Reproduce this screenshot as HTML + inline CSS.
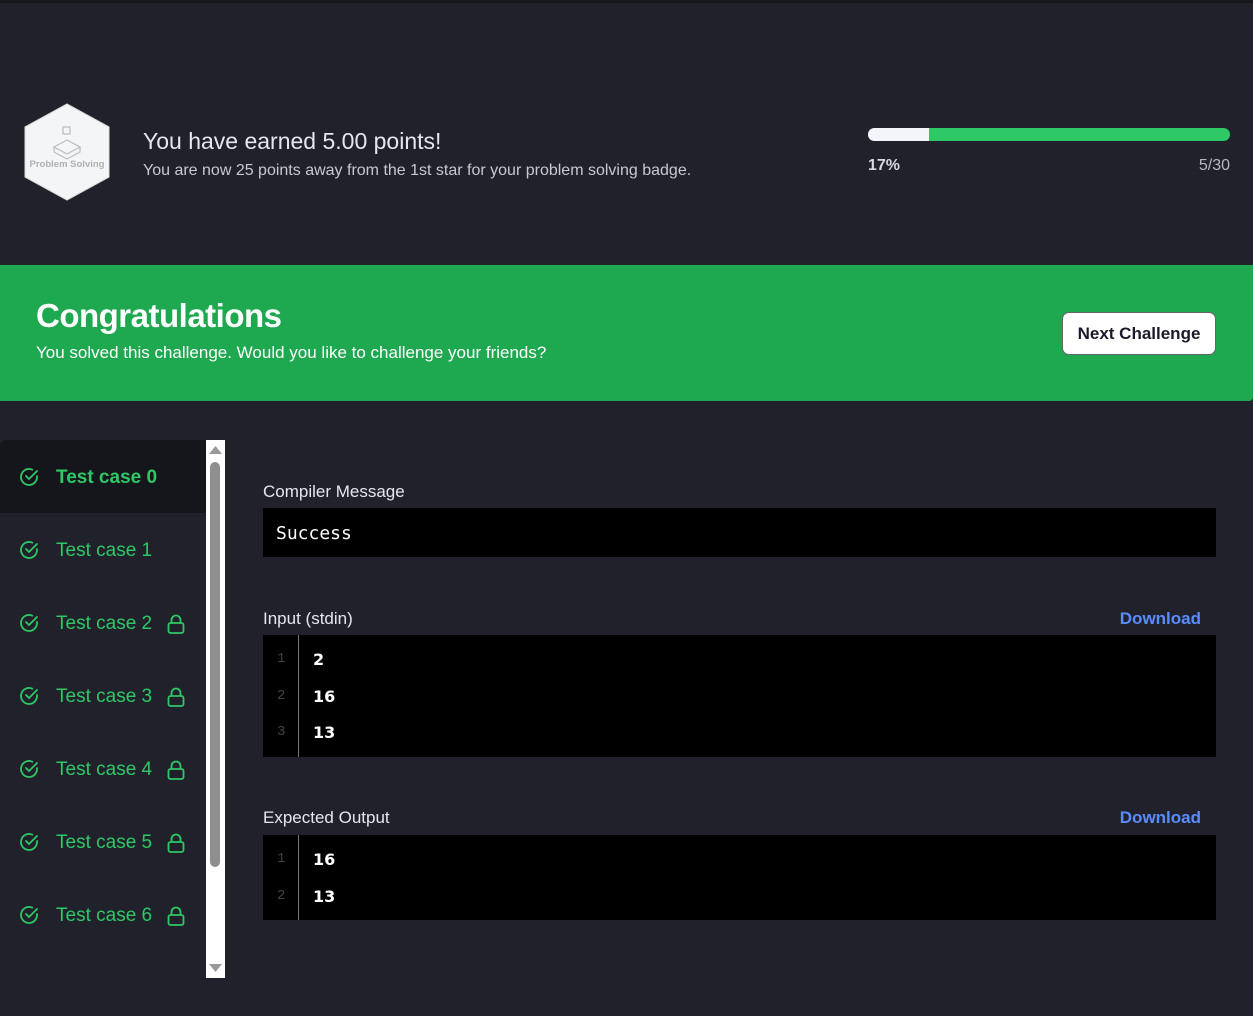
<!DOCTYPE html>
<html><head><meta charset="utf-8"><style>
*{margin:0;padding:0;box-sizing:border-box}
body{width:1253px;height:1016px;background:#20212b;font-family:"Liberation Sans",sans-serif;position:relative;overflow:hidden;color:#e6e6ee}
.topline{position:absolute;left:0;top:0;width:1253px;height:3px;background:#16171d}
.abs{position:absolute}
.tc{position:absolute;left:0;width:206px;height:73px;display:flex;align-items:center;font-size:19px;color:#2ec866;padding-top:3px}
.tc svg.c{margin-left:19px;margin-right:17px;margin-top:-3px}
.lock{margin-left:15px}
.box{position:absolute;left:263px;width:953px;background:#000}
.ln{position:absolute;left:0;width:36px;border-right:1px solid #777;height:100%;top:0}
.num{position:absolute;color:#444;font-size:14px;font-family:"Liberation Mono",monospace;left:14px}
.val{position:absolute;left:50px;color:#fff;font-weight:bold;font-size:16px;font-family:"DejaVu Sans",sans-serif}
.lbl{position:absolute;left:263px;font-size:17px;color:#e6e6ee}
.dl{position:absolute;right:52px;font-size:17px;font-weight:bold;color:#5b8cff}
</style></head><body>
<div class="topline"></div>
<svg class="abs" style="left:20px;top:102px" width="94" height="100" viewBox="0 0 94 100"><polygon points="47,2 89,25 89,75 47,98 5,75 5,25" fill="#f4f5f7" stroke="#ddd" stroke-width="1" stroke-linejoin="round"/>
<g fill="none" stroke="#bbb" stroke-width="1.2"><polygon points="47,38 60,45 47,52 34,45"/><path d="M34,45v5l13,7 13-7v-5"/><rect x="43" y="25" width="7" height="7"/></g>
<text x="47" y="65" font-size="9.5" font-weight="bold" fill="#b0b0b0" text-anchor="middle" font-family="Liberation Sans">Problem Solving</text></svg>
<div class="abs" style="left:143px;top:128px;font-size:23px;color:#e6e6ee">You have earned 5.00 points!</div>
<div class="abs" style="left:143px;top:162px;font-size:16px;color:#c8c8d2">You are now 25 points away from the 1st star for your problem solving badge.</div>
<div class="abs" style="left:868px;top:128px;width:362px;height:13px;border-radius:7px;background:#2ec866;overflow:hidden"><div style="width:61px;height:13px;background:#f4f5fb"></div></div>
<div class="abs" style="left:868px;top:157px;font-size:16px;font-weight:bold;color:#d8d8e0">17%</div>
<div class="abs" style="left:1194px;top:157px;font-size:16px;color:#b8b8c2;width:36px;text-align:right">5/30</div>
<div class="abs" style="left:0;top:265px;width:1253px;height:136px;background:#1ea84f;border-radius:0 0 4px 0"></div>
<div class="abs" style="left:36px;top:297px;font-size:33px;font-weight:bold;color:#fff;letter-spacing:-0.5px">Congratulations</div>
<div class="abs" style="left:36px;top:343px;font-size:17px;color:#fff">You solved this challenge. Would you like to challenge your friends?</div>
<div class="abs" style="left:1062px;top:312px;width:154px;height:43px;background:#fff;border:1px solid #666;border-radius:7px;color:#1a1a2a;font-size:17px;display:flex;align-items:center;justify-content:center;font-weight:bold">Next Challenge</div>
<div class="abs" style="left:0;top:440px;width:206px;height:73px;background:#15161b;border-radius:6px 0 0 0"></div>
<div class="abs" style="left:206px;top:440px;width:19px;height:538px;background:#fff"></div>
<div class="abs" style="left:210px;top:462px;width:10px;height:405px;background:#8f8f8f;border-radius:5px"></div>
<svg class="abs" style="left:209px;top:446px" width="13" height="9"><polygon points="6.5,0 13,8 0,8" fill="#999"/></svg>
<svg class="abs" style="left:209px;top:964px" width="13" height="9"><polygon points="0,0 13,0 6.5,8" fill="#999"/></svg>
<div class="tc" style="top:440px;font-weight:bold"><svg class="c" width="20" height="20" viewBox="0 0 20 20" fill="none" stroke="#2ec866" stroke-width="1.8" stroke-linecap="round"><path d="M18,9v1a8,8 0 1 1-4.7-7.3"/><path d="M7,9l3,3 8-8"/></svg>Test case 0</div>
<div class="tc" style="top:513px"><svg class="c" width="20" height="20" viewBox="0 0 20 20" fill="none" stroke="#2ec866" stroke-width="1.8" stroke-linecap="round"><path d="M18,9v1a8,8 0 1 1-4.7-7.3"/><path d="M7,9l3,3 8-8"/></svg>Test case 1</div>
<div class="tc" style="top:586px"><svg class="c" width="20" height="20" viewBox="0 0 20 20" fill="none" stroke="#2ec866" stroke-width="1.8" stroke-linecap="round"><path d="M18,9v1a8,8 0 1 1-4.7-7.3"/><path d="M7,9l3,3 8-8"/></svg>Test case 2<svg class="lock" width="18" height="20" viewBox="0 0 18 20" fill="none" stroke="#2ec866" stroke-width="1.8"><rect x="1.5" y="9" width="15" height="10" rx="2"/><path d="M4.5,9V6a4.5,4.5 0 0 1 9,0v3"/></svg></div>
<div class="tc" style="top:659px"><svg class="c" width="20" height="20" viewBox="0 0 20 20" fill="none" stroke="#2ec866" stroke-width="1.8" stroke-linecap="round"><path d="M18,9v1a8,8 0 1 1-4.7-7.3"/><path d="M7,9l3,3 8-8"/></svg>Test case 3<svg class="lock" width="18" height="20" viewBox="0 0 18 20" fill="none" stroke="#2ec866" stroke-width="1.8"><rect x="1.5" y="9" width="15" height="10" rx="2"/><path d="M4.5,9V6a4.5,4.5 0 0 1 9,0v3"/></svg></div>
<div class="tc" style="top:732px"><svg class="c" width="20" height="20" viewBox="0 0 20 20" fill="none" stroke="#2ec866" stroke-width="1.8" stroke-linecap="round"><path d="M18,9v1a8,8 0 1 1-4.7-7.3"/><path d="M7,9l3,3 8-8"/></svg>Test case 4<svg class="lock" width="18" height="20" viewBox="0 0 18 20" fill="none" stroke="#2ec866" stroke-width="1.8"><rect x="1.5" y="9" width="15" height="10" rx="2"/><path d="M4.5,9V6a4.5,4.5 0 0 1 9,0v3"/></svg></div>
<div class="tc" style="top:805px"><svg class="c" width="20" height="20" viewBox="0 0 20 20" fill="none" stroke="#2ec866" stroke-width="1.8" stroke-linecap="round"><path d="M18,9v1a8,8 0 1 1-4.7-7.3"/><path d="M7,9l3,3 8-8"/></svg>Test case 5<svg class="lock" width="18" height="20" viewBox="0 0 18 20" fill="none" stroke="#2ec866" stroke-width="1.8"><rect x="1.5" y="9" width="15" height="10" rx="2"/><path d="M4.5,9V6a4.5,4.5 0 0 1 9,0v3"/></svg></div>
<div class="tc" style="top:878px"><svg class="c" width="20" height="20" viewBox="0 0 20 20" fill="none" stroke="#2ec866" stroke-width="1.8" stroke-linecap="round"><path d="M18,9v1a8,8 0 1 1-4.7-7.3"/><path d="M7,9l3,3 8-8"/></svg>Test case 6<svg class="lock" width="18" height="20" viewBox="0 0 18 20" fill="none" stroke="#2ec866" stroke-width="1.8"><rect x="1.5" y="9" width="15" height="10" rx="2"/><path d="M4.5,9V6a4.5,4.5 0 0 1 9,0v3"/></svg></div>

<div class="lbl" style="top:482px">Compiler Message</div>
<div class="box" style="top:508px;height:49px"><div style="position:absolute;left:13px;top:15px;font-family:'DejaVu Sans Mono',monospace;font-size:18px;color:#fff">Success</div></div>

<div class="lbl" style="top:609px">Input (stdin)</div>
<div class="dl" style="top:609px">Download</div>
<div class="box" style="top:635px;height:122px"><div class="ln"></div>
<div class="num" style="top:16px">1</div><div class="val" style="top:15px">2</div>
<div class="num" style="top:53px">2</div><div class="val" style="top:52px">16</div>
<div class="num" style="top:89px">3</div><div class="val" style="top:88px">13</div></div>

<div class="lbl" style="top:808px">Expected Output</div>
<div class="dl" style="top:808px">Download</div>
<div class="box" style="top:835px;height:85px"><div class="ln"></div>
<div class="num" style="top:16px">1</div><div class="val" style="top:15px">16</div>
<div class="num" style="top:53px">2</div><div class="val" style="top:52px">13</div></div>
</body></html>
